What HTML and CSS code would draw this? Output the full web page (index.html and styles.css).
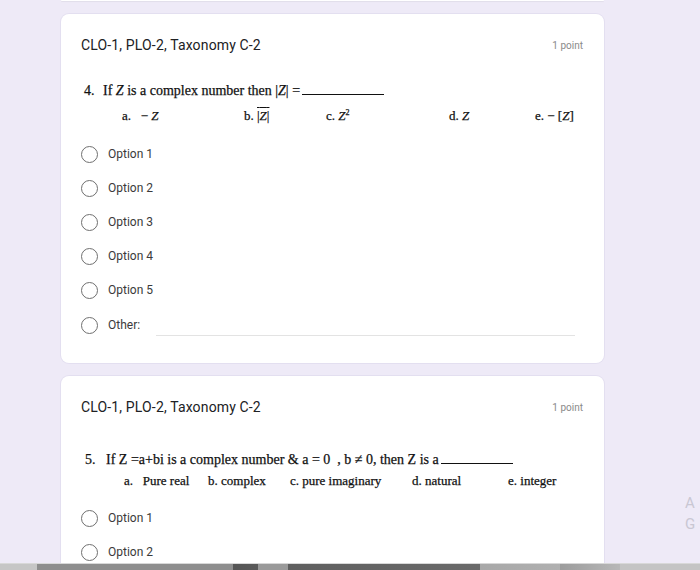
FILE: index.html
```html
<!DOCTYPE html>
<html>
<head>
<meta charset="utf-8">
<link rel="stylesheet" href="styles.css">
</head>
<body>
<div class="page">
  <main class="cards">
    <div class="card-prev"></div>

    <section class="card card-q4">
      <header class="card-head">
        <h2 class="title">CLO-1, PLO-2, Taxonomy C-2</h2>
        <span class="points">1 point</span>
      </header>
      <div class="qimg">
        <div class="qline q4"><span class="qnum">4.</span><span>If <i>Z</i> is a complex number then |<i>Z</i>| =</span><span class="blank blank4"></span></div>
        <div class="ans ans4">
          <span>a.&nbsp;&nbsp; − <i>Z</i></span>
          <span>b. <span class="over">|<i>Z</i>|</span></span>
          <span>c. <i>Z</i><sup>2</sup></span>
          <span>d. <i>Z</i></span>
          <span>e. − [<i>Z</i>]</span>
        </div>
      </div>
      <ul class="options">
        <li class="opt"><span class="radio"></span><span class="label">Option 1</span></li>
        <li class="opt"><span class="radio"></span><span class="label">Option 2</span></li>
        <li class="opt"><span class="radio"></span><span class="label">Option 3</span></li>
        <li class="opt"><span class="radio"></span><span class="label">Option 4</span></li>
        <li class="opt"><span class="radio"></span><span class="label">Option 5</span></li>
        <li class="opt opt-other"><span class="radio"></span><span class="label">Other:</span><span class="other-line"></span></li>
      </ul>
    </section>

    <section class="card card-q5">
      <header class="card-head">
        <h2 class="title">CLO-1, PLO-2, Taxonomy C-2</h2>
        <span class="points">1 point</span>
      </header>
      <div class="qimg">
        <div class="qline q5"><span class="qnum">5.</span><span>If Z =a+bi is a complex number &amp; a = 0&nbsp; , b ≠ 0, then Z is a</span><span class="blank blank5"></span></div>
        <div class="ans ans5">
          <span>a.&nbsp;&nbsp; Pure real</span>
          <span>b. complex</span>
          <span>c. pure imaginary</span>
          <span>d. natural</span>
          <span>e. integer</span>
        </div>
      </div>
      <ul class="options">
        <li class="opt"><span class="radio"></span><span class="label">Option 1</span></li>
        <li class="opt"><span class="radio"></span><span class="label">Option 2</span></li>
      </ul>
    </section>
  </main>
  <aside class="side">
    <span>A</span>
    <span>G</span>
  </aside>
</div>
<div class="taskbar"></div>
</body>
</html>
```

FILE: styles.css
```css
* { box-sizing: border-box; }
html, body {
  margin: 0;
  padding: 0;
  width: 700px;
  height: 570px;
  overflow: hidden;
  background: #eeeaf7;
}
.page {
  display: flex;
  align-items: flex-start;
  padding-left: 61px;
}
.cards {
  width: 543px;
  display: flex;
  flex-direction: column;
  gap: 13px;
}
.card-prev {
  height: 1px;
  background: #fff;
  border-radius: 0 0 8px 8px;
  box-shadow: 0 1px 1px rgba(0,0,0,0.06);
}
.card {
  background: #fff;
  border-radius: 8px;
  padding: 21px 21px 20px 20px;
  box-shadow: 0 0 0 1px rgba(220,215,235,0.6);
}
.card-head {
  display: flex;
  justify-content: space-between;
  align-items: center;
  height: 20px;
}
.title {
  margin: 0;
  font-family: Roboto, "Open Sans", sans-serif;
  font-weight: 400;
  font-size: 14px;
  letter-spacing: 0.15px;
  color: #202124;
}
.points {
  font-family: Roboto, sans-serif;
  font-size: 10px;
  color: #8a8a8a;
}
.qimg {
  font-family: "Liberation Serif", "DejaVu Serif", serif;
  font-size: 14px;
  color: #111;
  -webkit-text-stroke: 0.25px #111;
}
.qline {
  display: flex;
  align-items: baseline;
  height: 20px;
  line-height: 20px;
  white-space: nowrap;
}
.q4 { margin-top: 26px; padding-left: 3px; }
.q5 { margin-top: 33px; padding-left: 4px; }
.qnum { display: inline-block; width: 19px; }
.q5 .qnum { width: 21px; }
.blank {
  display: inline-block;
  border-bottom: 1px solid #111;
  height: 1px;
  margin-left: 2px;
}
.blank4 { width: 82px; }
.blank5 { width: 72px; }
.ans {
  display: grid;
  height: 20px;
  line-height: 20px;
  white-space: nowrap;
  font-size: 13px;
}
.ans4 {
  margin-top: 5px;
  padding-left: 41px;
  grid-template-columns: 122px 82px 123px 86px auto;
}
.ans5 {
  margin-top: 1px;
  padding-left: 43px;
  grid-template-columns: 84px 82px 122px 96px auto;
}
.over {
  text-decoration: overline;
}
sup {
  font-size: 8px;
  line-height: 0;
  vertical-align: 5px;
}
.options {
  list-style: none;
  margin: 11px 0 0 0;
  padding: 0;
}
.card-q5 .options { margin-top: 10px; }
.opt {
  display: flex;
  align-items: center;
  height: 34px;
}
.radio {
  flex: none;
  width: 17px;
  height: 17px;
  border: 1.6px solid #6f6f6f;
  border-radius: 50%;
}
.label {
  margin-left: 10px;
  font-family: Roboto, sans-serif;
  font-size: 12px;
  color: #3a3a3a;
}
.opt-other { height: 36px; }
.other-line {
  align-self: flex-end;
  margin: 0 0 7px 16px;
  width: 419px;
  border-bottom: 1px solid #e3e3e3;
}
.side {
  display: flex;
  flex-direction: column;
  margin-top: 493px;
  margin-left: 81px;
  font-family: Roboto, sans-serif;
  font-size: 15px;
  line-height: 21px;
  color: #c9c7d3;
}
.taskbar {
  position: fixed;
  left: 0;
  right: 0;
  bottom: 0;
  height: 7px;
  border-top: 1px solid #d8d8d8;
  background: linear-gradient(to right,
    #c6c6c6 0, #c6c6c6 37px,
    #8e8e8e 37px, #8e8e8e 233px,
    #555 233px, #5a5a5a 258px,
    #9a9a9a 258px, #9a9a9a 288px,
    #5f5f5f 288px, #6a6a6a 480px,
    #a8a8a8 480px, #b0b0b0 560px,
    #9c9c9c 560px, #b8b8b8 620px,
    #c4c4c4 620px, #c4c4c4 700px);
}
```
